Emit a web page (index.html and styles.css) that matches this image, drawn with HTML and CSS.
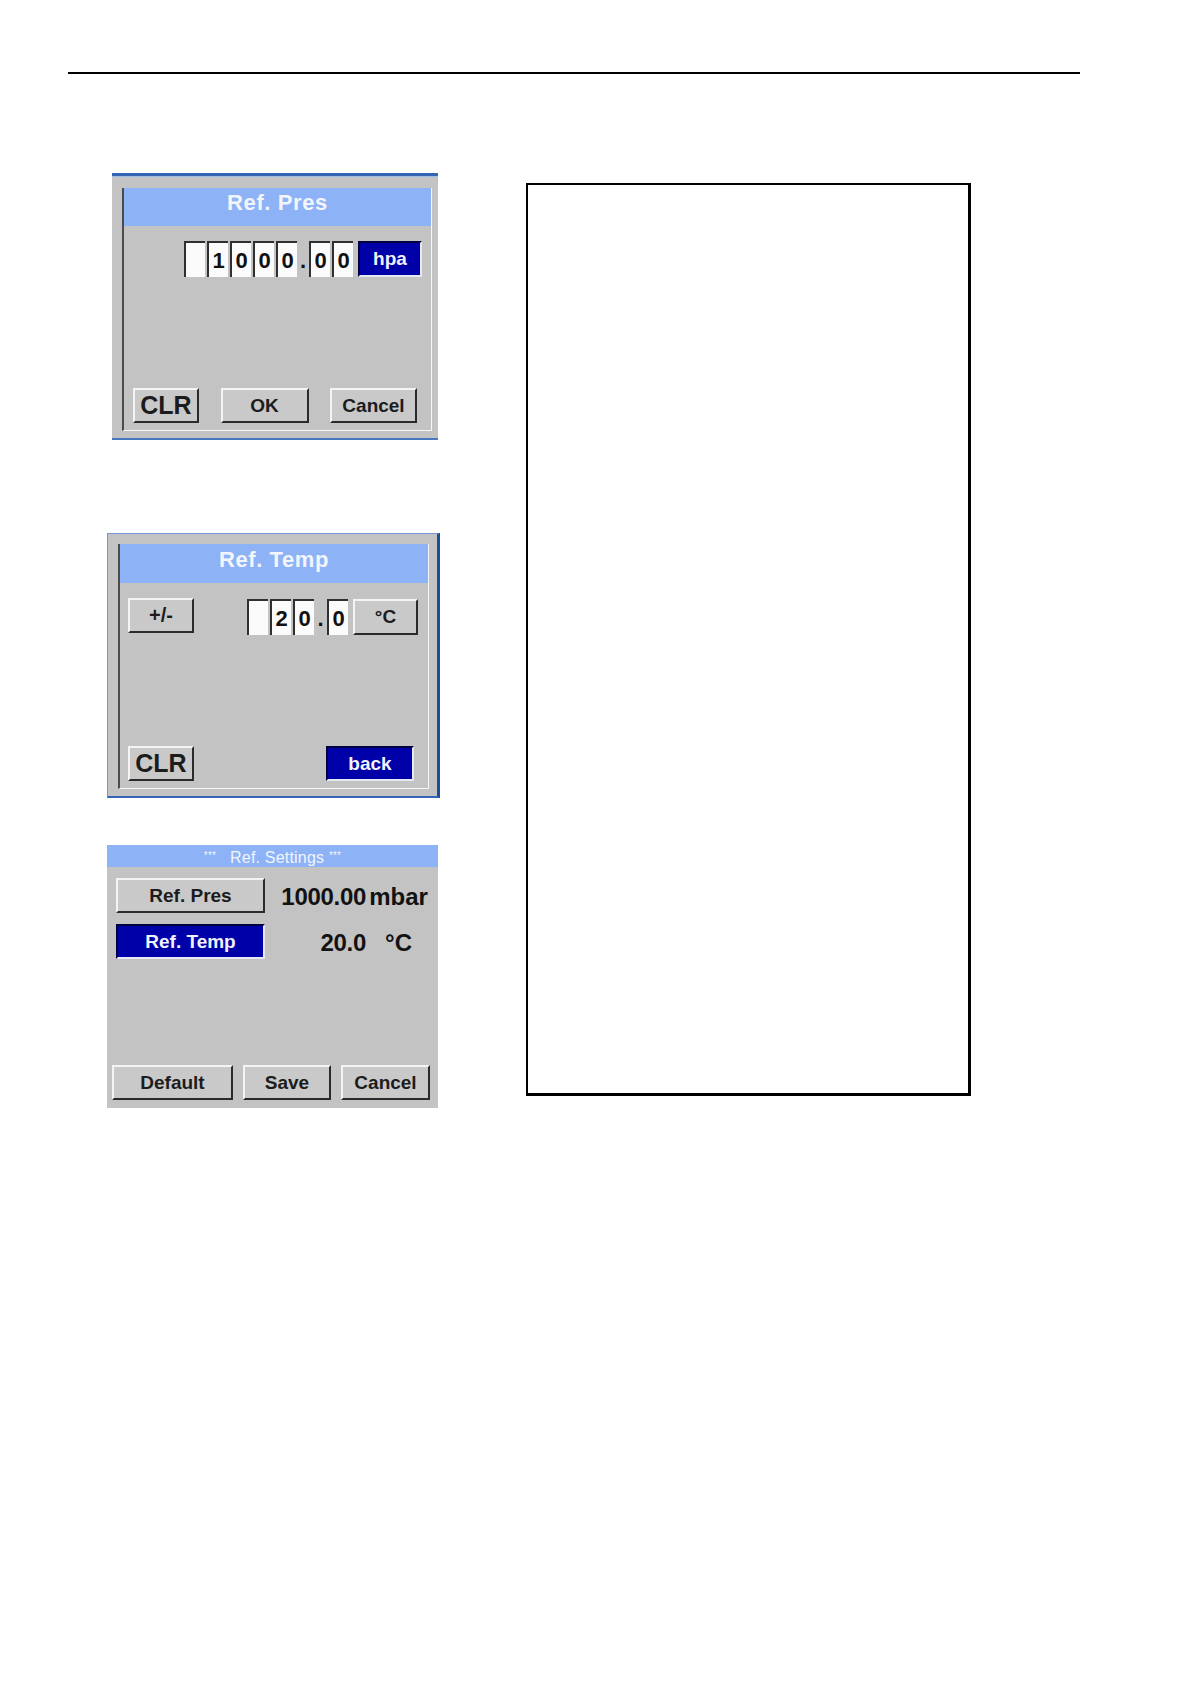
FILE: index.html
```html
<!DOCTYPE html>
<html>
<head>
<meta charset="utf-8">
<title>Ref. Settings</title>
<link rel="stylesheet" href="styles.css">
</head>
<body>
<div class="page">
  <div class="rule"></div>
  <div class="content">
    <div class="col">
      <div class="panel p1">
        <div class="frame">
          <div class="title t1">Ref. Pres</div>
          <div class="pbody b1">
            <div class="entry e1">
              <span class="dg"></span><span class="dg">1</span><span class="dg">0</span><span class="dg">0</span><span class="dg">0</span><span class="dot">.</span><span class="dg">0</span><span class="dg">0</span>
              <span class="btn sel unit-btn">hpa</span>
            </div>
            <div class="actions a1">
              <span class="btn clr">CLR</span>
              <span class="btn w88">OK</span>
              <span class="btn w87">Cancel</span>
            </div>
          </div>
        </div>
      </div>

      <div class="panel p2">
        <div class="frame">
          <div class="title t2">Ref. Temp</div>
          <div class="pbody b2">
            <div class="entry e2">
              <span class="btn sign">+/-</span>
              <div class="digits">
                <span class="dg"></span><span class="dg">2</span><span class="dg">0</span><span class="dot dot2">.</span><span class="dg">0</span>
                <span class="btn unit-btn unit-c">°C</span>
              </div>
            </div>
            <div class="actions a2">
              <span class="btn clr">CLR</span>
              <span class="btn sel w88">back</span>
            </div>
          </div>
        </div>
      </div>

      <div class="panel p3">
        <div class="title t3"><span class="stars">***</span>&nbsp;&nbsp; Ref. Settings <span class="stars">***</span></div>
        <div class="b3">
          <div class="row r1">
            <span class="btn big">Ref. Pres</span>
            <span class="num">1000.00</span>
            <span class="unit">mbar</span>
          </div>
          <div class="row">
            <span class="btn big sel">Ref. Temp</span>
            <span class="num">20.0</span>
            <span class="unit">°C</span>
          </div>
          <div class="actions a3">
            <span class="btn big w121">Default</span>
            <span class="btn big w88">Save</span>
            <span class="btn big w89">Cancel</span>
          </div>
        </div>
      </div>
    </div>

    <div class="note"></div>
  </div>
</div>
</body>
</html>
```

FILE: styles.css
```css
body {
  margin: 0;
  background: #ffffff;
  font-family: "Liberation Sans", Arial, sans-serif;
}

.page {
  width: 1191px;
  height: 1684px;
  padding-top: 72px;
  box-sizing: border-box;
  overflow: hidden;
}

.rule {
  margin-left: 68px;
  width: 1012px;
  height: 1.5px;
  background: #000;
}

.content {
  display: flex;
  align-items: flex-start;
  padding-left: 107px;
  margin-top: 99.5px;
}

.col {
  flex: none;
  width: 333px;
  display: flex;
  flex-direction: column;
}

.panel {
  box-sizing: border-box;
  background: #c3c3c3;
}

.p1 {
  margin-left: 5px;
  width: 326px;
  height: 267px;
  border-top: 3px solid #3465b4;
  border-bottom: 2px solid #4a78c0;
  padding: 12px 6px 7px 10px;
  box-shadow: inset 0 1px 0 #9fbbe6;
}

.p2 {
  margin-top: 93px;
  width: 333px;
  height: 265px;
  border-top: 1px solid #7398d8;
  border-left: 1px solid #7398d8;
  border-right: 3px solid #1e4c9c;
  border-bottom: 2px solid #3566b5;
  padding: 10px 8px 7px 10px;
}

.p3 {
  margin-top: 47px;
  width: 331px;
  height: 263px;
  display: flex;
  flex-direction: column;
}

.frame {
  box-sizing: border-box;
  height: 100%;
  border-left: 2px solid #4b4b4b;
  border-right: 1px solid #f6f6f6;
  border-bottom: 1px solid #f6f6f6;
  display: flex;
  flex-direction: column;
}

.title {
  flex: none;
  background: #8db2f6;
  color: #f2f5fc;
  font-weight: bold;
  font-size: 22px;
  letter-spacing: 0.6px;
  text-align: center;
}

.t1 { height: 38px; line-height: 30px; }
.t2 { height: 39px; line-height: 31px; }

.t3 {
  height: 22px;
  line-height: 22px;
  font-size: 16px;
  font-weight: normal;
  letter-spacing: 0.2px;
  overflow: hidden;
}

.stars {
  font-size: 10px;
  vertical-align: 4px;
}

.pbody {
  flex: 1;
  display: flex;
  flex-direction: column;
  justify-content: space-between;
}

.b1 { padding: 15px 0 7px 0; }
.b2 { padding: 15px 0 7px 0; }

.entry {
  display: flex;
  align-items: flex-start;
}

.e1 {
  justify-content: flex-end;
  gap: 2px;
  padding-right: 9px;
}

.e2 {
  padding: 0 10px 0 8px;
}

.digits {
  margin-left: auto;
  margin-top: 1px;
  display: flex;
  gap: 2px;
}

.dg {
  box-sizing: border-box;
  width: 21px;
  height: 36px;
  background: #fbfbfb;
  border-left: 2px solid #2f2f2f;
  border-top: 2px solid #2f2f2f;
  font-size: 22px;
  font-weight: bold;
  line-height: 36px;
  text-align: center;
  color: #111;
}

.dot {
  width: 8px;
  height: 36px;
  padding-top: 2px;
  box-sizing: border-box;
  font-size: 22px;
  font-weight: bold;
  line-height: 36px;
  text-align: center;
  color: #111;
}

.dot2 { width: 9px; }

.btn {
  box-sizing: border-box;
  height: 35px;
  display: flex;
  align-items: center;
  justify-content: center;
  background: #c9c9c9;
  border-style: solid;
  border-width: 2px;
  border-color: #f4f4f4 #2a2a2a #2a2a2a #f4f4f4;
  font-size: 19px;
  font-weight: bold;
  color: #1c1c1c;
}

.btn.sel {
  background: #0000a8;
  color: #f0f2ff;
  border-color: #00003c #e6e8f4 #e6e8f4 #00003c;
}

.unit-btn {
  margin-left: 3px;
  width: 64px;
  height: 36px;
}

.unit-c { width: 65px; }

.clr {
  width: 66px;
  font-size: 25px;
}

.sign {
  width: 66px;
  font-size: 20px;
}

.w87 { width: 87px; }
.w88 { width: 88px; }
.w89 { width: 89px; }
.w121 { width: 121px; }

.actions {
  display: flex;
}

.a1 {
  justify-content: space-between;
  padding: 0 14px 0 9px;
}

.a2 {
  justify-content: space-between;
  padding: 0 14px 0 8px;
}

.b3 {
  flex: 1;
  padding: 11px 0 8px 0;
  display: flex;
  flex-direction: column;
}

.row {
  display: flex;
  align-items: flex-start;
  padding-left: 9px;
}

.r1 { margin-bottom: 10px; }

.big {
  font-size: 19px;
}

.row .big { width: 149px; }

.num,
.unit {
  padding-top: 1px;
  line-height: 35px;
  font-size: 24px;
  font-weight: bold;
  color: #121212;
}

.num {
  width: 101px;
  text-align: right;
  letter-spacing: -0.3px;
}

.unit {
  width: 65px;
  text-align: center;
}

.a3 {
  margin-top: auto;
  gap: 10px;
  padding-left: 5px;
}

.note {
  flex: none;
  box-sizing: border-box;
  margin-left: 86px;
  margin-top: 10px;
  width: 445px;
  height: 913px;
  border: 2px solid #000;
  border-right-width: 3px;
  border-bottom-width: 3px;
}
```
